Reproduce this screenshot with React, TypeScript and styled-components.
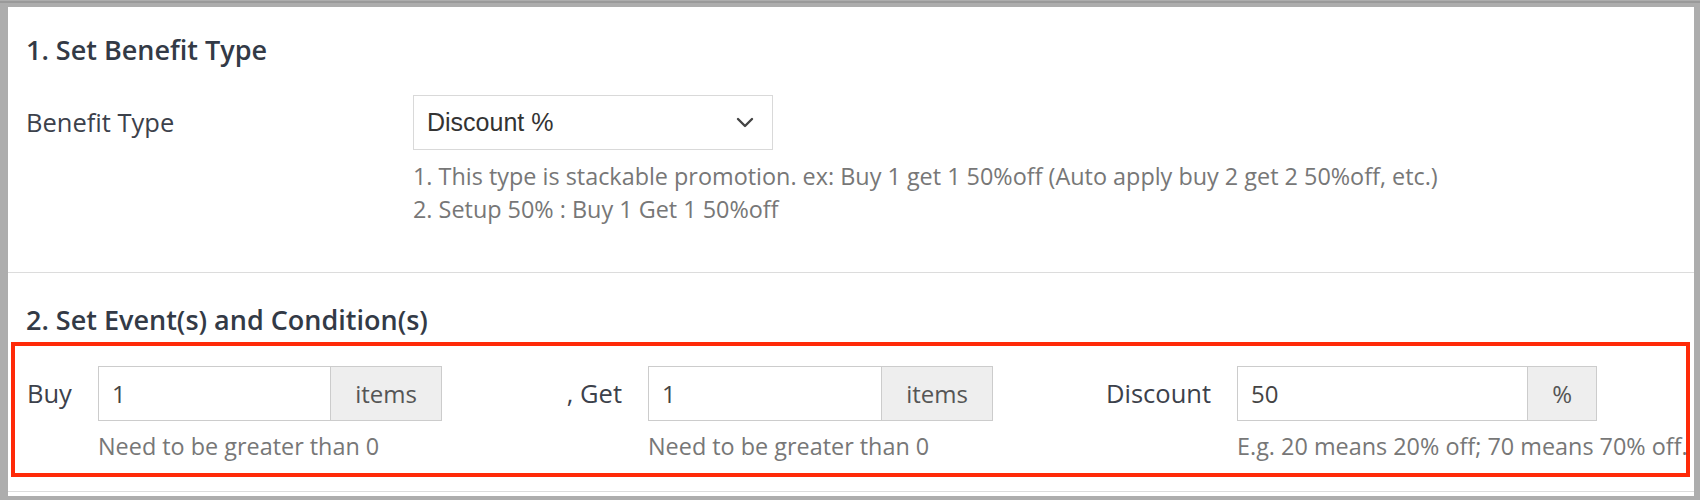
import styled, { createGlobalStyle } from 'styled-components';

const GlobalStyle = createGlobalStyle`
  html, body {
    margin: 0;
    padding: 0;
    background: #adadad;
  }
  body {
    border-top: 1px solid #adadad;
    box-shadow: inset 0 2px 0 #9a9a9a;
    font-family: "Open Sans", "Noto Sans", sans-serif;
  }
`;

const Panel = styled.div`
  margin: 6px 6px 4px 8px;
  background: #fff;
  padding-bottom: 3px;
  height: 489px;
  box-sizing: border-box;
`;

const Section = styled.section<{ $top: number; $bottom: number }>`
  padding: ${(p) => p.$top}px 0 ${(p) => p.$bottom}px 18px;
  border-bottom: 1px solid #dcdcdc;
`;

const Heading = styled.h2`
  margin: 0;
  font-size: 27px;
  line-height: 36px;
  font-weight: 600;
  color: #333a46;
`;

const FormRow = styled.div`
  display: flex;
  align-items: flex-start;
  margin-top: 27px;
`;

const RowLabel = styled.label`
  width: 387px;
  flex: none;
  font-size: 25.5px;
  line-height: 55px;
  color: #3c414b;
`;

const Control = styled.div`
  display: flex;
  flex-direction: column;
`;

const SelectBox = styled.div`
  width: 360px;
  height: 55px;
  box-sizing: border-box;
  border: 1px solid #d9d9d9;
  display: flex;
  align-items: center;
  justify-content: space-between;
  padding: 0 18px 0 13px;
  font-family: "Liberation Sans", Arial, sans-serif;
  font-size: 25px;
  color: #333;
`;

const HelpBlock = styled.div<{ $gap: number }>`
  margin-top: ${(p) => p.$gap}px;
  font-size: 23.4px;
  line-height: 33px;
  color: #777;
  white-space: nowrap;
`;

const Highlight = styled.div`
  margin: 4px 4px 0 -15px;
  border: 4px solid #ff2a08;
  padding: 20px 0 10px 12px;
  display: flex;
  align-items: flex-start;
`;

const Field = styled.div`
  display: flex;
  align-items: flex-start;
`;

const FieldLabel = styled.label<{ $width: number; $right?: boolean }>`
  width: ${(p) => p.$width}px;
  flex: none;
  text-align: ${(p) => (p.$right ? 'right' : 'left')};
  padding-right: ${(p) => (p.$right ? 26 : 0)}px;
  box-sizing: border-box;
  font-size: 25.5px;
  line-height: 55px;
  color: #3c414b;
`;

const InputGroup = styled.div<{ $width: number }>`
  width: ${(p) => p.$width}px;
  height: 55px;
  display: flex;
  box-sizing: border-box;
  border: 1px solid #ccc;
`;

const Input = styled.div`
  flex: 1;
  padding-left: 13px;
  font-size: 24px;
  line-height: 53px;
  color: #444;
`;

const Addon = styled.div`
  flex: none;
  padding: 0 24px;
  border-left: 1px solid #ccc;
  background: #eee;
  font-size: 24px;
  line-height: 53px;
  color: #555;
  text-align: center;
`;

const Chevron = () => (
  <svg width="18" height="11" viewBox="0 0 18 11">
    <polyline points="2,2 9,9 16,2" fill="none" stroke="#444" strokeWidth="2.4" strokeLinecap="round" strokeLinejoin="round" />
  </svg>
);

type ConditionProps = {
  label: string;
  labelWidth: number;
  right?: boolean;
  value: string;
  unit: string;
  width: number;
  help: string;
};

const Condition = ({ label, labelWidth, right, value, unit, width, help }: ConditionProps) => (
  <Field>
    <FieldLabel $width={labelWidth} $right={right}>
      {label}
    </FieldLabel>
    <Control>
      <InputGroup $width={width}>
        <Input>{value}</Input>
        <Addon>{unit}</Addon>
      </InputGroup>
      <HelpBlock $gap={9}>{help}</HelpBlock>
    </Control>
  </Field>
);

export default function App() {
  return (
    <>
      <GlobalStyle />
      <Panel>
        <Section $top={25} $bottom={46}>
          <Heading>1. Set Benefit Type</Heading>
          <FormRow>
            <RowLabel>Benefit Type</RowLabel>
            <Control>
              <SelectBox>
                <span>Discount %</span>
                <Chevron />
              </SelectBox>
              <HelpBlock $gap={10}>
                1. This type is stackable promotion. ex: Buy 1 get 1 50%off (Auto apply buy 2 get 2 50%off, etc.)
                <br />
                2. Setup 50% : Buy 1 Get 1 50%off
              </HelpBlock>
            </Control>
          </FormRow>
        </Section>
        <Section $top={29} $bottom={14}>
          <Heading>2. Set Event(s) and Condition(s)</Heading>
          <Highlight>
            <Condition label="Buy" labelWidth={71} value="1" unit="items" width={344} help="Need to be greater than 0" />
            <Condition label=", Get" labelWidth={206} right value="1" unit="items" width={345} help="Need to be greater than 0" />
            <Condition label="Discount" labelWidth={244} right value="50" unit="%" width={360} help="E.g. 20 means 20% off; 70 means 70% off." />
          </Highlight>
        </Section>
      </Panel>
    </>
  );
}
